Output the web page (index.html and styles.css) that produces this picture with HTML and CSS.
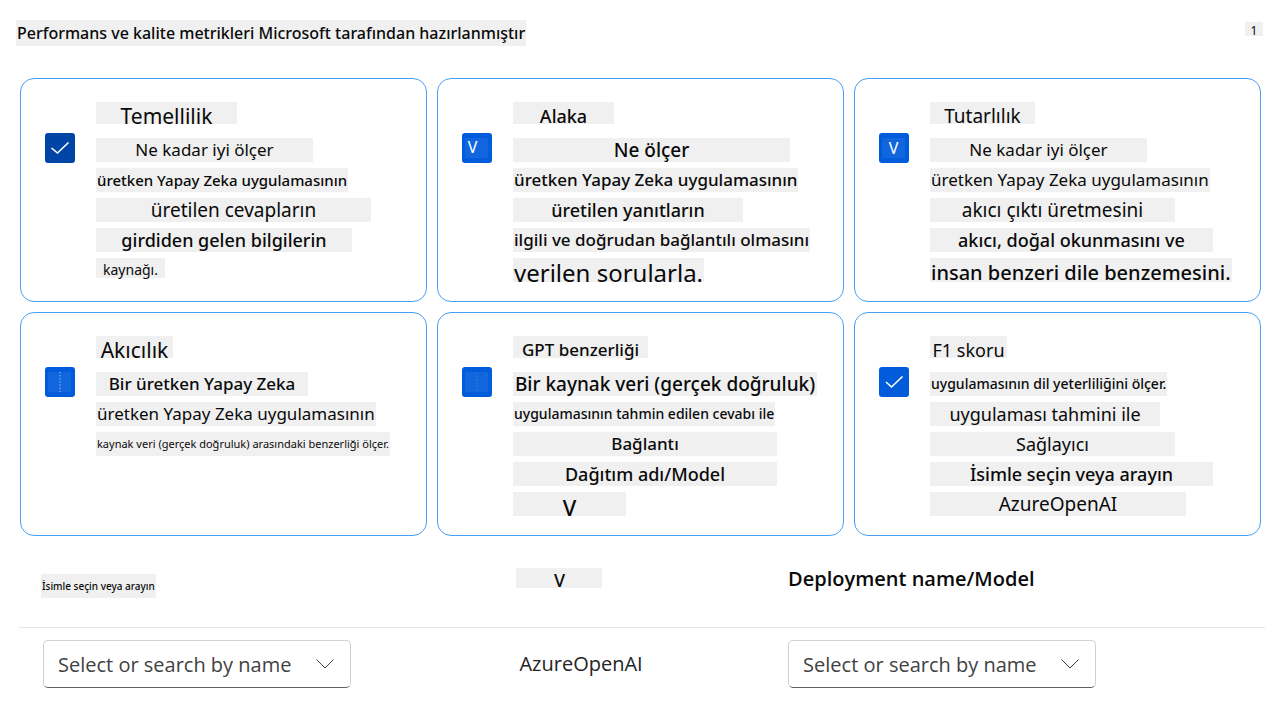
FILE: index.html
```
<!DOCTYPE html>
<html lang="tr">
<head>
<meta charset="utf-8">
<meta name="viewport" content="width=device-width, initial-scale=1">
<title>Performans ve kalite metrikleri</title>
<link rel="stylesheet" href="styles.css">
</head>
<body>
<header class="top">
  <h1 class="mark t16">Performans ve kalite metrikleri Microsoft tarafından hazırlanmıştır</h1>
  <span class="badge">1</span>
</header>

<main>
  <section class="cards">
    <article class="card">
      <label class="check">
        <input class="box box-dark" type="checkbox" checked aria-labelledby="m1">
        <svg class="tick" viewBox="0 0 30 30" aria-hidden="true"><path d="M6.500 15L12.500 20L23.500 9.500"/></svg>
      </label>
      <div class="lines">
        <h2 class="mark title w141 t21 regular" id="m1">Temellilik</h2>
        <p class="mark w217 t17 regular">Ne kadar iyi ölçer</p>
        <p class="mark t15">üretken Yapay Zeka uygulamasının</p>
        <p class="mark w275 t19 regular">üretilen cevapların</p>
        <p class="mark w256 t18">girdiden gelen bilgilerin</p>
        <p class="mark short w69 t14 regular">kaynağı.</p>
      </div>
    </article>

    <article class="card">
      <label class="check">
        <input class="box" type="checkbox" checked aria-labelledby="m2">
        <span class="glyph glyph-left" aria-hidden="true">V</span>
      </label>
      <div class="lines">
        <h2 class="mark title w101 t18" id="m2">Alaka</h2>
        <p class="mark w277 t19">Ne ölçer</p>
        <p class="mark t17">üretken Yapay Zeka uygulamasının</p>
        <p class="mark w230 t18">üretilen yanıtların</p>
        <p class="mark t17">ilgili ve doğrudan bağlantılı olmasını</p>
        <p class="mark low t24 regular">verilen sorularla.</p>
      </div>
    </article>

    <article class="card">
      <label class="check">
        <input class="box" type="checkbox" checked aria-labelledby="m3">
        <span class="glyph" aria-hidden="true">V</span>
      </label>
      <div class="lines">
        <h2 class="mark title w105 t19 regular" id="m3">Tutarlılık</h2>
        <p class="mark w217 t17 regular">Ne kadar iyi ölçer</p>
        <p class="mark t17 regular">üretken Yapay Zeka uygulamasının</p>
        <p class="mark w245 t19 regular">akıcı çıktı üretmesini</p>
        <p class="mark w283 t18">akıcı, doğal okunmasını ve</p>
        <p class="mark low t20">insan benzeri dile benzemesini.</p>
      </div>
    </article>

    <article class="card">
      <label class="check">
        <input class="box" type="checkbox" checked aria-labelledby="m4">
        <span class="glyph" aria-hidden="true"><svg class="dash" viewBox="0 0 22 20"><path d="M11.500 0v20"/></svg></span>
      </label>
      <div class="lines">
        <h2 class="mark title w77 t21 regular" id="m4">Akıcılık</h2>
        <p class="mark w212 t17">Bir üretken Yapay Zeka</p>
        <p class="mark t17 regular">üretken Yapay Zeka uygulamasının</p>
        <p class="mark t11 regular">kaynak veri (gerçek doğruluk) arasındaki benzerliği ölçer.</p>
      </div>
    </article>

    <article class="card">
      <label class="check">
        <input class="box" type="checkbox" checked aria-labelledby="m5">
        <span class="glyph" aria-hidden="true"><svg class="dash faint" viewBox="0 0 22 20"><path d="M11.500 1v18M20.500 3v2"/></svg></span>
      </label>
      <div class="lines">
        <h2 class="mark title w135 t17" id="m5">GPT benzerliği</h2>
        <p class="mark w304 t19">Bir kaynak veri (gerçek doğruluk)</p>
        <p class="mark t14">uygulamasının tahmin edilen cevabı ile</p>
        <p class="mark w264 t17">Bağlantı</p>
        <p class="mark w264 t18">Dağıtım adı/Model</p>
        <p class="mark low w113 t22">V</p>
      </div>
    </article>

    <article class="card">
      <label class="check">
        <input class="box" type="checkbox" checked aria-labelledby="m6">
        <svg class="tick" viewBox="0 0 30 30" aria-hidden="true"><path d="M7 15L12.500 20L23.500 9.500"/></svg>
      </label>
      <div class="lines">
        <h2 class="mark title w77 t18 regular" id="m6">F1 skoru</h2>
        <p class="mark t14">uygulamasının dil yeterliliğini ölçer.</p>
        <p class="mark w230 t18 regular">uygulaması tahmini ile</p>
        <p class="mark w245 t18 regular">Sağlayıcı</p>
        <p class="mark w283 t18">İsimle seçin veya arayın</p>
        <p class="mark w256 t19 regular">AzureOpenAI</p>
      </div>
    </article>
  </section>

  <table class="setup">
    <colgroup><col class="c1"><col class="c2"><col></colgroup>
    <thead>
      <tr>
        <th scope="col"><span class="mark t10">İsimle seçin veya arayın</span></th>
        <th scope="col"><span class="mark short w86 t18">V</span></th>
        <th scope="col" class="model">Deployment name/Model</th>
      </tr>
    </thead>
    <tbody>
      <tr>
        <td>
          <div class="pick">
            <select class="select" aria-label="Connection"><option>Select or search by name</option></select>
            <svg class="chevron" viewBox="0 0 20 12" aria-hidden="true"><path d="M1.500 1.500L10 10L18.500 1.500"/></svg>
          </div>
        </td>
        <td class="provider">AzureOpenAI</td>
        <td>
          <div class="pick">
            <select class="select" aria-label="Deployment name/Model"><option>Select or search by name</option></select>
            <svg class="chevron" viewBox="0 0 20 12" aria-hidden="true"><path d="M1.500 1.500L10 10L18.500 1.500"/></svg>
          </div>
        </td>
      </tr>
    </tbody>
  </table>
</main>
</body>
</html>
```
FILE: styles.css
```
* { box-sizing: border-box; }

body {
  margin: 0;
  padding: 20px 23px 20px 16px;
  background: #fff;
  color: #0a0a0a;
  font-family: "Noto Sans", "Open Sans", sans-serif;
  font-weight: 500;
}

h1, h2, p { margin: 0; font-weight: inherit; }

/* Header */
.top {
  display: flex;
  justify-content: space-between;
  align-items: flex-start;
  margin-bottom: 32px;
  padding-right: 2px;
}
.top h1 { height: 26px; line-height: 26px; }
.badge {
  width: 18px;
  height: 14px;
  margin-top: 2px;
  background: #f0f0f0;
  font-size: 12px;
  font-weight: 400;
  line-height: 18px;
  text-align: center;
}

/* Shaded text strips */
.mark {
  display: block;
  width: fit-content;
  height: 24px;
  padding: 0 1px;
  background: #f0f0f0;
  line-height: 24px;
  text-align: center;
  white-space: nowrap;
}
.regular { font-weight: 400; }
.short { height: 20px; }
.low { line-height: 30px; }

.t10 { font-size: 10px; }
.t11 { font-size: 11px; }
.t14 { font-size: 14px; }
.t15 { font-size: 15px; }
.t16 { font-size: 16px; }
.t17 { font-size: 17px; }
.t18 { font-size: 18px; }
.t19 { font-size: 19px; }
.t20 { font-size: 20px; }
.t21 { font-size: 21px; }
.t22 { font-size: 22px; }
.t24 { font-size: 24px; }

.w69 { width: 69px; }
.w77 { width: 77px; }
.w86 { width: 86px; }
.w101 { width: 101px; }
.w105 { width: 105px; }
.w113 { width: 113px; }
.w135 { width: 135px; }
.w141 { width: 141px; }
.w212 { width: 212px; }
.w217 { width: 217px; }
.w230 { width: 230px; }
.w245 { width: 245px; }
.w256 { width: 256px; }
.w264 { width: 264px; }
.w275 { width: 275px; }
.w277 { width: 277px; }
.w283 { width: 283px; }
.w304 { width: 304px; }

/* Metric cards */
.cards {
  display: grid;
  grid-template-columns: repeat(3, 1fr);
  gap: 10px;
  margin: 0 4px;
}
.card {
  display: flex;
  gap: 21px;
  padding: 23px 12px 19px 24px;
  border: 1px solid #479ef5;
  border-radius: 14px;
}
.lines {
  display: flex;
  flex-direction: column;
  gap: 6px;
}
.title {
  height: 22px;
  margin-bottom: 8px;
  line-height: 28px;
}

.check {
  position: relative;
  flex: none;
  width: 30px;
  height: 30px;
  margin-top: 31px;
}
.box {
  appearance: none;
  display: block;
  width: 30px;
  height: 30px;
  margin: 0;
  border-radius: 3px;
  background: #005cdb;
}
.box-dark { background: #0045a6; }
.tick {
  position: absolute;
  inset: 0;
  fill: none;
  stroke: #fff;
  stroke-width: 1.6;
}
.glyph {
  position: absolute;
  inset: 5px 4px 5px 3px;
  background: #1165dd;
  color: #fff;
  font-size: 16px;
  font-weight: 400;
  line-height: 20px;
  text-align: center;
}
.glyph-left { padding-right: 8px; line-height: 18px; }
.dash {
  display: block;
  fill: none;
  stroke: #c4d9f6;
  stroke-dasharray: 1 2;
}
.faint { stroke: #4d8be4; }

/* Connection table */
.setup {
  width: calc(100% - 3px);
  margin: 16px 0 0 3px;
  border-collapse: collapse;
  table-layout: fixed;
}
.c1 { width: 38%; }
.c2 { width: 21.8%; }
.setup th, .setup td {
  padding: 0 0 0 24px;
  text-align: left;
}
.setup th {
  height: 75px;
  padding-bottom: 22px;
  border-bottom: 1px solid #e6e6e6;
  font-weight: 500;
}
.setup th .t10 { margin: 16px 0 0 -2px; }
.setup .model { font-family: "Open Sans", sans-serif; font-size: 20px; font-weight: 600; }
.setup td { padding-top: 12px; }
.setup .provider {
  padding-left: 27px;
  font-family: "Open Sans", sans-serif;
  font-size: 20px;
  font-weight: 400;
  color: #242424;
}

.pick { position: relative; width: 308px; max-width: 100%; }
.select {
  appearance: none;
  display: block;
  width: 100%;
  height: 48px;
  padding: 2px 48px 0 14px;
  border: 1px solid #d1d1d1;
  border-bottom-color: #616161;
  border-radius: 5px;
  background: #fff;
  color: #424242;
  font-family: "Open Sans", sans-serif;
  font-size: 20px;
}
.chevron {
  position: absolute;
  top: 18px;
  right: 16px;
  width: 20px;
  height: 12px;
  fill: none;
  stroke: #424242;
  pointer-events: none;
}
```
